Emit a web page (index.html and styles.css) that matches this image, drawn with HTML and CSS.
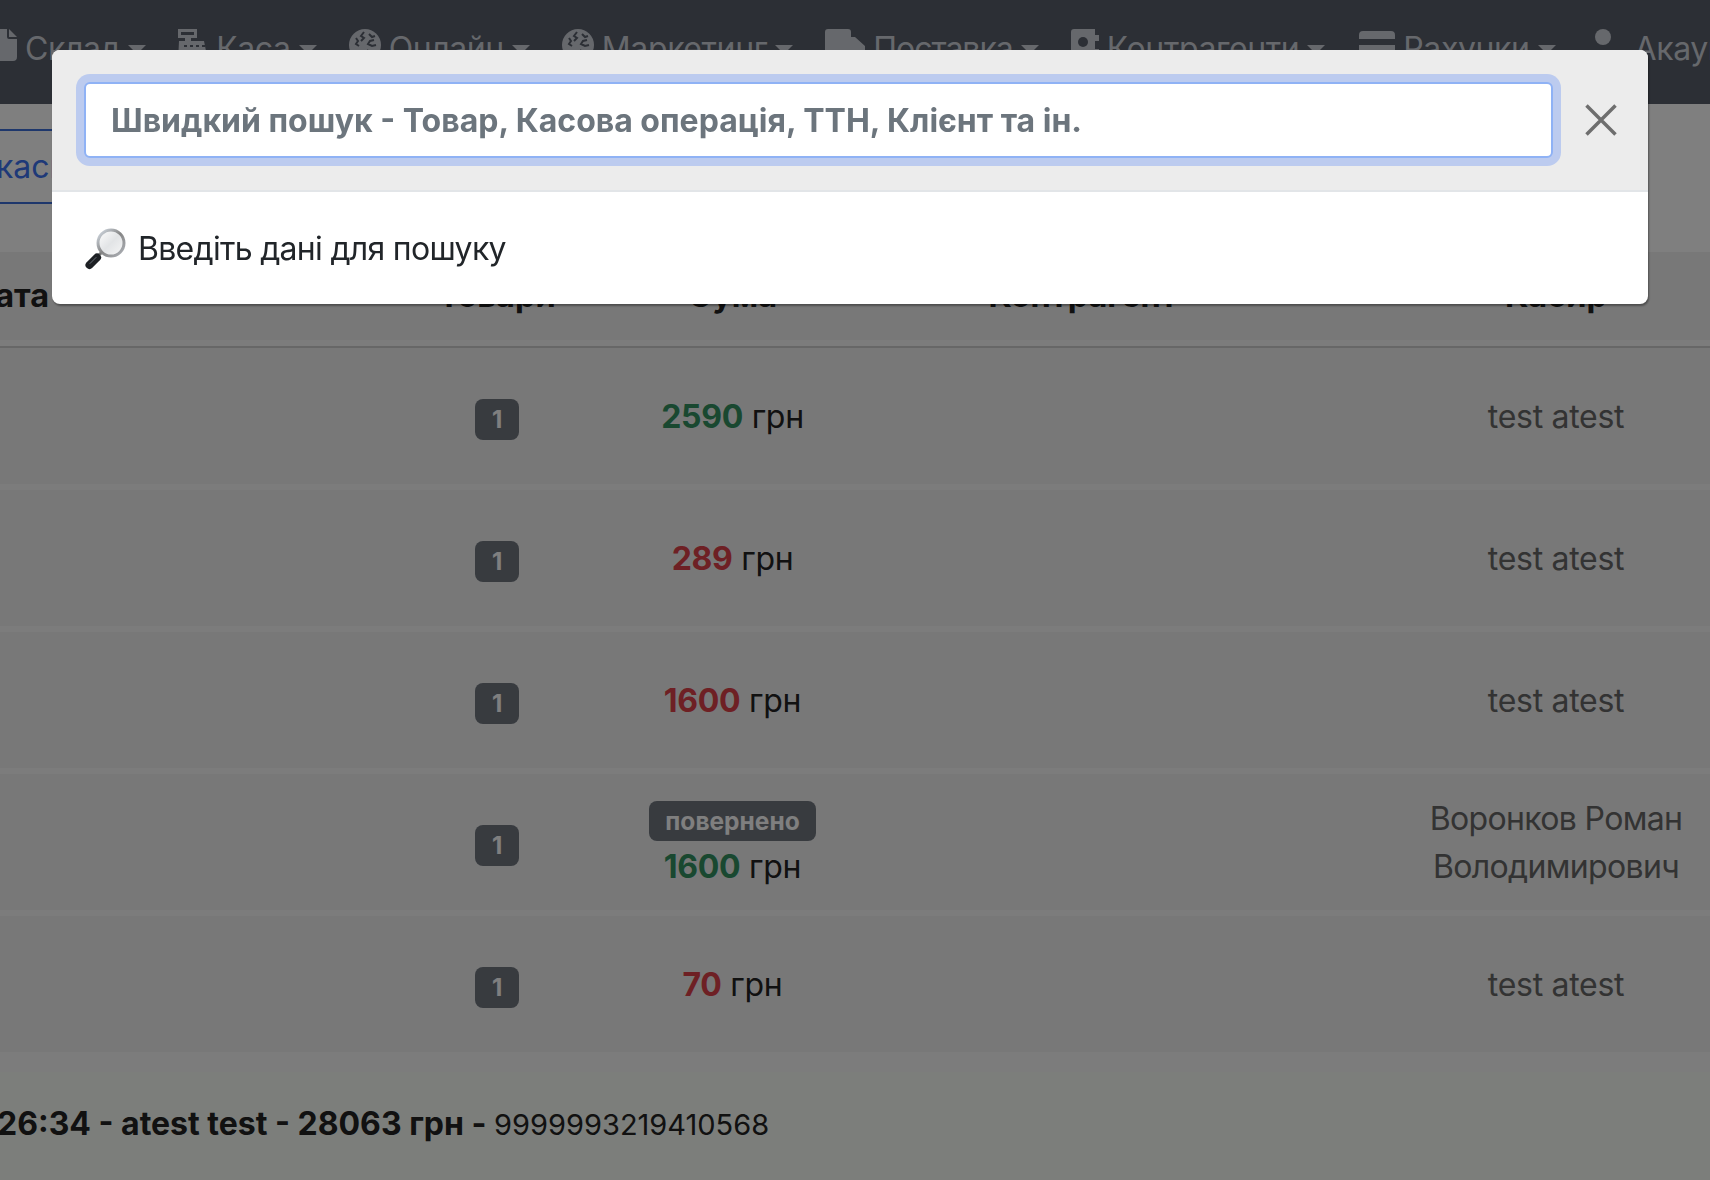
FILE: index.html
```html
<!DOCTYPE html>
<html lang="uk">
<head>
<meta charset="utf-8">
<title>Швидкий пошук</title>
<link rel="stylesheet" href="styles.css">
</head>
<body>
<div class="page">
  <nav class="nav">
    <a class="nav-item"><svg class="ic ic-file" viewBox="0 0 24 32"><path d="M0 4a4 4 0 0 1 4-4h10v8a2 2 0 0 0 2 2h8v18a4 4 0 0 1-4 4H4a4 4 0 0 1-4-4z"/><path d="M16 0l8 8h-8z"/></svg><span>Склад</span><i class="caret"></i></a>
    <a class="nav-item"><svg class="ic ic-reg" viewBox="0 0 30 32"><path fill-rule="evenodd" d="M0 0h19v9h-6v3h13l4 20H0l1-20h6V9H0zM3 3v3h13V3z"/><path class="cut" d="M6 16h3v2H6zM12 16h3v2h-3zM18 16h3v2h-3zM24 16h3v2h-3z"/></svg><span>Каса</span><i class="caret"></i></a>
    <a class="nav-item"><svg class="ic ic-globe" viewBox="0 0 32 32"><circle cx="16" cy="16" r="16"/><path class="cut-line" d="M15 3l-3 4 3 2-3 3M7 9l2 3-2 3 3 2M20 5l3 3 3-1M25 11l-4 1-2 3 4 2 4-1M18 21l3 3-2 4"/></svg><span>Онлайн</span><i class="caret"></i></a>
    <a class="nav-item"><svg class="ic ic-globe" viewBox="0 0 32 32"><circle cx="16" cy="16" r="16"/><path class="cut-line" d="M15 3l-3 4 3 2-3 3M7 9l2 3-2 3 3 2M20 5l3 3 3-1M25 11l-4 1-2 3 4 2 4-1M18 21l3 3-2 4"/></svg><span>Маркетинг</span><i class="caret"></i></a>
    <a class="nav-item nav-tight"><svg class="ic ic-truck" viewBox="0 0 40 32"><path d="M3 0h20a3 3 0 0 1 3 3v5h4l10 9v10H0V3a3 3 0 0 1 3-3z"/></svg><span>Поставка</span><i class="caret"></i></a>
    <a class="nav-item"><svg class="ic ic-book" viewBox="0 0 28 32"><path d="M3 0h21v6h4v6h-4v8h4v6h-4v6H3a3 3 0 0 1-3-3V3a3 3 0 0 1 3-3z"/><circle class="cut" cx="12" cy="13" r="5"/></svg><span>Контрагенти</span><i class="caret"></i></a>
    <a class="nav-item nav-bills"><svg class="ic ic-card" viewBox="0 0 36 32"><path d="M4 2h28a4 4 0 0 1 4 4v4H0V6a4 4 0 0 1 4-4zM0 16h36v10a4 4 0 0 1-4 4H4a4 4 0 0 1-4-4z"/></svg><span>Рахунки</span><i class="caret"></i></a>
    <a class="nav-item nav-user"><svg class="ic ic-user" viewBox="0 0 20 32"><circle cx="10" cy="8" r="8"/><path d="M0 32a10 10 0 0 1 20 0z"/></svg><span>Акаунт</span></a>
  </nav>

  <section class="toolbar">
    <a class="tab">Всі каси</a>
  </section>

  <section class="table">
    <div class="row row-head">
      <div class="cell cell-date">Дата</div>
      <div class="cell">Товари</div>
      <div class="cell">Сума</div>
      <div class="cell">Контрагент</div>
      <div class="cell">Касир</div>
    </div>
    <div class="row">
      <div class="cell cell-date"></div>
      <div class="cell"><span class="count">1</span></div>
      <div class="cell"><b class="plus">2590</b> грн</div>
      <div class="cell"></div>
      <div class="cell muted">test atest</div>
    </div>
    <div class="row">
      <div class="cell cell-date"></div>
      <div class="cell"><span class="count">1</span></div>
      <div class="cell"><b class="minus">289</b> грн</div>
      <div class="cell"></div>
      <div class="cell muted">test atest</div>
    </div>
    <div class="row">
      <div class="cell cell-date"></div>
      <div class="cell"><span class="count">1</span></div>
      <div class="cell"><b class="minus">1600</b> грн</div>
      <div class="cell"></div>
      <div class="cell muted">test atest</div>
    </div>
    <div class="row">
      <div class="cell cell-date"></div>
      <div class="cell"><span class="count">1</span></div>
      <div class="cell"><span class="returned">повернено</span><br><b class="plus">1600</b> грн</div>
      <div class="cell"></div>
      <div class="cell muted cell-name">Воронков Роман<br>Володимирович</div>
    </div>
    <div class="row">
      <div class="cell cell-date"></div>
      <div class="cell"><span class="count">1</span></div>
      <div class="cell"><b class="minus">70</b> грн</div>
      <div class="cell"></div>
      <div class="cell muted">test atest</div>
    </div>
  </section>

  <footer class="foot">
    <b>26:34 - atest test - 28063 грн - </b><span class="foot-code">9999993219410568</span>
  </footer>
</div>

<div class="overlay"></div>

<div class="modal">
  <header class="modal-head">
    <input class="search" type="text" placeholder="Швидкий пошук - Товар, Касова операція, ТТН, Клієнт та ін.">
    <button class="close" type="button" aria-label="Закрити">
      <svg viewBox="0 0 32 32"><path d="M1.5 1.5l29 29M30.5 1.5l-29 29"/></svg>
    </button>
  </header>
  <div class="modal-body">
    <svg class="lens" viewBox="0 0 42 42">
      <defs>
        <linearGradient id="rim" x1="0" y1="0" x2="1" y2="1"><stop offset="0" stop-color="#d5dde6"/><stop offset="0.5" stop-color="#868686"/><stop offset="1" stop-color="#aeb2b8"/></linearGradient>
        <linearGradient id="glass" x1="0" y1="0" x2="1" y2="1"><stop offset="0" stop-color="#ffffff"/><stop offset="0.5" stop-color="#e2e4e6"/><stop offset="1" stop-color="#f7f7f7"/></linearGradient>
      </defs>
      <path class="lens-neck" d="M18 23l-5 5"/>
      <path class="lens-handle" d="M12 29.5L4.5 37"/>
      <path class="lens-shine" d="M11 29.5L5 35.5"/>
      <circle cx="26" cy="15" r="13" fill="url(#glass)" stroke="url(#rim)" stroke-width="3"/>
    </svg>
    <span>Введіть дані для пошуку</span>
  </div>
</div>
</body>
</html>
```
FILE: styles.css
```css
* { box-sizing: border-box; }

html, body {
  margin: 0;
  height: 100%;
  overflow: hidden;
}

body {
  font-family: Inter, "Noto Sans", sans-serif;
  font-size: 32px;
  line-height: 48px;
  color: #222;
  background: #f8f8f8;
}

.page {
  width: 1710px;
  height: 1180px;
  overflow: hidden;
}

.nav {
  display: flex;
  height: 104px;
  padding-top: 25px;
  margin-left: -7px;
  gap: 32px;
  background: #585e6a;
  color: #ccd0d8;
  letter-spacing: -0.4px;
  white-space: nowrap;
}

.nav-item {
  display: flex;
  align-items: center;
  height: 48px;
  gap: 8px;
}

.nav-tight { letter-spacing: -1px; }
.nav-bills { margin-left: 2px; }
.nav-user { margin-left: 5px; }

.ic { fill: #ccd0d8; flex: none; margin-top: -8px; }
.ic .cut { fill: #585e6a; }
.ic .cut-line { fill: none; stroke: #585e6a; stroke-width: 2; }
.ic-file { width: 24px; height: 32px; }
.ic-reg { width: 30px; height: 32px; }
.ic-globe { width: 32px; height: 32px; }
.ic-truck { width: 40px; height: 32px; }
.ic-book { width: 28px; height: 32px; }
.ic-card { width: 36px; height: 32px; }
.ic-user { width: 20px; height: 32px; margin-right: 14px; }

.caret {
  width: 0;
  height: 0;
  border: 9px solid transparent;
  border-top-color: #ccd0d8;
  border-bottom: 0;
}

.toolbar {
  display: flex;
  align-items: flex-start;
  height: 148px;
  padding-top: 25px;
  background: #fff;
}

.tab {
  display: block;
  height: 75px;
  margin-left: -84px;
  padding: 12px 24px;
  border-top: 2px solid #3c6ed8;
  border-bottom: 2px solid #3c6ed8;
  color: #3c72f0;
  white-space: nowrap;
}

.table { width: 1814px; }

.row {
  display: grid;
  grid-template-columns: 458px 200px 271px 430px 516px;
  margin-left: -61px;
  height: 136px;
  margin-bottom: 6px;
  padding-top: 2px;
  background: #f0f0f0;
  text-align: center;
  letter-spacing: -0.3px;
}

.row:last-child { margin-bottom: 0; }

.row-head {
  height: 96px;
  margin-bottom: 0;
  padding-top: 0;
  padding-bottom: 6px;
  border-bottom: 2px solid #cfcfcf;
  box-shadow: inset 0 -6px 0 #f8f8f8;
  font-size: 32.5px;
  font-weight: 700;
  letter-spacing: 0;
}

.row > .cell { align-self: center; }

.cell-date { text-align: left; padding-left: 0; }

.row-head .cell-date { padding-left: 28px; }

.muted { color: #666; }

.cell-name { letter-spacing: -0.65px; }

.plus { color: #329060; font-weight: 700; }
.minus { color: #dc4149; font-weight: 700; }

.count {
  display: inline-block;
  width: 44px;
  height: 41px;
  border-radius: 8px;
  background: #70767f;
  color: #fff;
  font-size: 24px;
  line-height: 41px;
  font-weight: 700;
  vertical-align: middle;
}

.returned {
  display: inline-block;
  height: 40px;
  padding: 0 16px;
  border-radius: 8px;
  background: #70767f;
  color: #fff;
  font-size: 24.5px;
  line-height: 40px;
  font-weight: 700;
  letter-spacing: 0;
}

.foot {
  margin-top: 20px;
  height: 108px;
  margin-left: -3px;
  padding-top: 28px;
  background: #f8fcf6;
  white-space: nowrap;
}

.foot-code { font-size: 29px; }

.overlay {
  position: fixed;
  inset: 0;
  background: rgba(0, 0, 0, .5);
}

.modal {
  position: fixed;
  left: 52px;
  top: 50px;
  width: 1596px;
  height: 254px;
  border-radius: 8px;
  background: #fff;
  box-shadow: 1px 2px 2px rgba(0, 0, 0, .35);
  overflow: hidden;
}

.modal-head {
  display: flex;
  align-items: center;
  height: 142px;
  padding: 32px;
  gap: 32px;
  background: #ececec;
  border-bottom: 2px solid #e2e5e8;
}

.search {
  flex: none;
  width: 1469px;
  height: 76px;
  padding: 0 25px;
  border: 2px solid #8fb2f5;
  border-radius: 6px;
  outline: none;
  box-shadow: 0 0 0 8px #bccbef;
  background: #fff;
  font: 700 32px Inter, sans-serif;
  color: #222;
}

.search::placeholder { color: #6c757d; opacity: 1; }

.close {
  flex: none;
  width: 32px;
  height: 32px;
  padding: 0;
  border: 0;
  background: none;
}

.close svg {
  display: block;
  width: 32px;
  height: 32px;
  fill: none;
  stroke: #6e6e6e;
  stroke-width: 3.5;
}

.modal-body {
  display: flex;
  align-items: center;
  gap: 11px;
  height: 112px;
  padding: 2px 33px 0;
  color: #212529;
  letter-spacing: -0.7px;
}

.lens { width: 42px; height: 42px; flex: none; }
.lens-neck { fill: none; stroke: #777; stroke-width: 3; }
.lens-handle { fill: none; stroke: #1d2024; stroke-width: 8; stroke-linecap: round; }
.lens-shine { fill: none; stroke: #6a7078; stroke-width: 1; stroke-linecap: round; }
```
